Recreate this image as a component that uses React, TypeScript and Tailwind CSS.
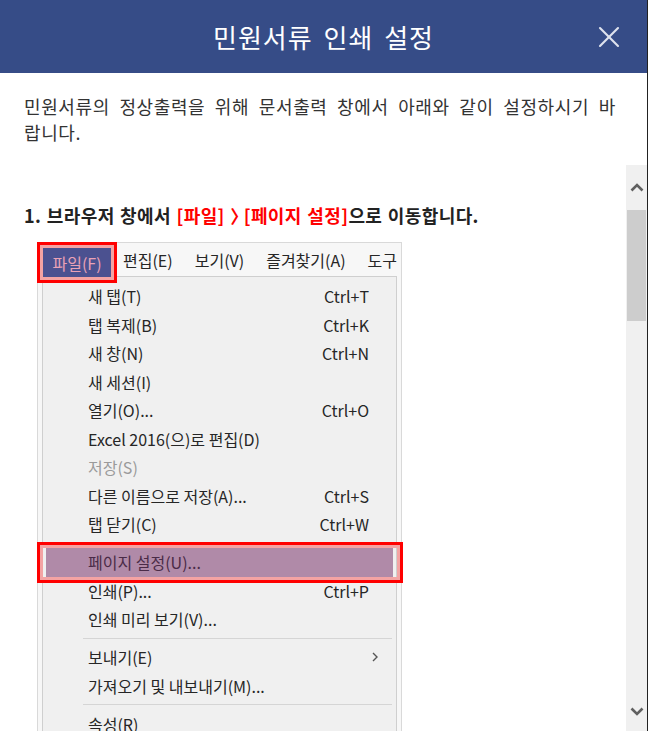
import { X } from "lucide-react";

const font = { fontFamily: '"Noto Sans CJK KR", "Noto Sans", sans-serif' };

type Item =
    | { kind: "item"; label: string; shortcut?: string; disabled?: boolean; sub?: boolean; active?: boolean }
    | { kind: "sep" };

const items: Item[] = [
    { kind: "item", label: "새 탭(T)", shortcut: "Ctrl+T" },
    { kind: "item", label: "탭 복제(B)", shortcut: "Ctrl+K" },
    { kind: "item", label: "새 창(N)", shortcut: "Ctrl+N" },
    { kind: "item", label: "새 세션(I)" },
    { kind: "item", label: "열기(O)...", shortcut: "Ctrl+O" },
    { kind: "item", label: "Excel 2016(으)로 편집(D)" },
    { kind: "item", label: "저장(S)", disabled: true },
    { kind: "item", label: "다른 이름으로 저장(A)...", shortcut: "Ctrl+S" },
    { kind: "item", label: "탭 닫기(C)", shortcut: "Ctrl+W" },
    { kind: "sep" },
    { kind: "item", label: "페이지 설정(U)...", active: true },
    { kind: "item", label: "인쇄(P)...", shortcut: "Ctrl+P" },
    { kind: "item", label: "인쇄 미리 보기(V)..." },
    { kind: "sep" },
    { kind: "item", label: "보내기(E)", sub: true },
    { kind: "item", label: "가져오기 및 내보내기(M)..." },
    { kind: "sep" },
    { kind: "item", label: "속성(R)" },
];

const Chevron = ({ down }: { down?: boolean }) => (
    <svg width="14" height="9" viewBox="0 0 14 9" className={down ? "rotate-180" : ""}>
        <polyline points="1.5,7.5 7,2 12.5,7.5" fill="none" stroke="#606060" strokeWidth="2.6" />
    </svg>
);

const BrowserMenu = () => {
    return (
        <div className="relative w-[365px] h-[500px] border border-[#d9d9d9] bg-[#f7f7f7] text-[16px] text-[#262626]">
            {/* menu bar */}
            <div className="flex items-center h-[33px] pl-[85px] gap-[22px] whitespace-nowrap overflow-hidden">
                <span>편집(E)</span>
                <span>보기(V)</span>
                <span>즐겨찾기(A)</span>
                <span>도구</span>
            </div>

            {/* highlighted 파일 menu */}
            <div className="absolute -left-px -top-px w-[80px] h-[41px] border-[3px] border-[#ff0000] bg-[#f4a3a3] p-[3px]">
                <div className="h-full bg-[#4b5190] text-[#eaa2b6] flex items-center justify-center">파일(F)</div>
            </div>

            {/* dropdown */}
            <div className="ml-[4px] mr-[4px] border border-[#cfcfcf] bg-[#f0f0f0] pt-[5px] h-[470px]">
                {items.map((it, i) =>
                    it.kind === "sep" ? (
                        <div key={i} className="h-[9.5px] flex items-center pl-[40px] pr-[4px]">
                            <div className="h-px w-full bg-[#d5d5d5]" />
                        </div>
                    ) : (
                        <div
                            key={i}
                            className={`relative h-[28.5px] flex items-center justify-between pl-[45px] pr-[27px] ${
                                it.active ? "mx-[3px] !pl-[42px] bg-[#b08aa8] text-[#4a2b47]" : ""
                            } ${it.disabled ? "text-[#9a9a9a]" : ""}`}
                        >
                            <span>{it.label}</span>
                            {it.shortcut && <span>{it.shortcut}</span>}
                            {it.sub && (
                                <svg width="8" height="12" viewBox="0 0 8 12" className="mr-[-10px]">
                                    <polyline points="2,2 6,6 2,10" fill="none" stroke="#555" strokeWidth="1.4" />
                                </svg>
                            )}
                            {it.active && (
                                <div className="absolute left-[-9px] right-[-10px] top-[-6px] bottom-[-6px] border-[3px] border-[#ff0000] shadow-[inset_0_0_0_3px_#f4a3a3]" />
                            )}
                        </div>
                    )
                )}
            </div>
        </div>
    );
};

const App = () => {
    return (
        <div style={font} className="w-[648px] h-[731px] bg-white flex flex-col overflow-hidden border-r border-[#222]">
            <div className="relative h-[73px] shrink-0 bg-[#364c87] flex items-center justify-center">
                <h1 className="text-white text-[26px] tracking-[1px] [word-spacing:4px]">민원서류 인쇄 설정</h1>
                <X className="absolute right-[20px] top-[19px] text-[#dfe3ee]" size={36} strokeWidth={1.4} />
            </div>

            <p className="shrink-0 h-[92px] px-6 pt-[20px] text-[18px] leading-[26px] text-[#333] tracking-[0.6px] [word-spacing:5px] break-all">
                민원서류의 정상출력을 위해 문서출력 창에서 아래와 같이 설정하시기 바랍니다.
            </p>

            <div className="flex-1 flex min-h-0">
                <div className="flex-1 overflow-hidden pt-[38px] pl-6">
                    <h2 className="text-[18px] font-bold leading-6 text-[#222] tracking-[0.4px] [word-spacing:1px]">
                        1. 브라우저 창에서{" "}
                        <span className="text-[#ff0000]">
                            [파일] <span className="mr-[-5px]">〉</span>[페이지 설정]
                        </span>
                        으로 이동합니다.
                    </h2>
                    <div className="mt-[15px] ml-[13px]">
                        <BrowserMenu />
                    </div>
                </div>

                <div className="w-[21px] bg-[#f0f0f0] flex flex-col items-center">
                    <div className="h-[45px] flex items-center justify-center">
                        <Chevron />
                    </div>
                    <div className="w-[19px] h-[111px] bg-[#cdcdcd]" />
                    <div className="flex-1" />
                    <div className="h-[40px] flex items-center justify-center">
                        <Chevron down />
                    </div>
                </div>
            </div>
        </div>
    );
};

export default App;
